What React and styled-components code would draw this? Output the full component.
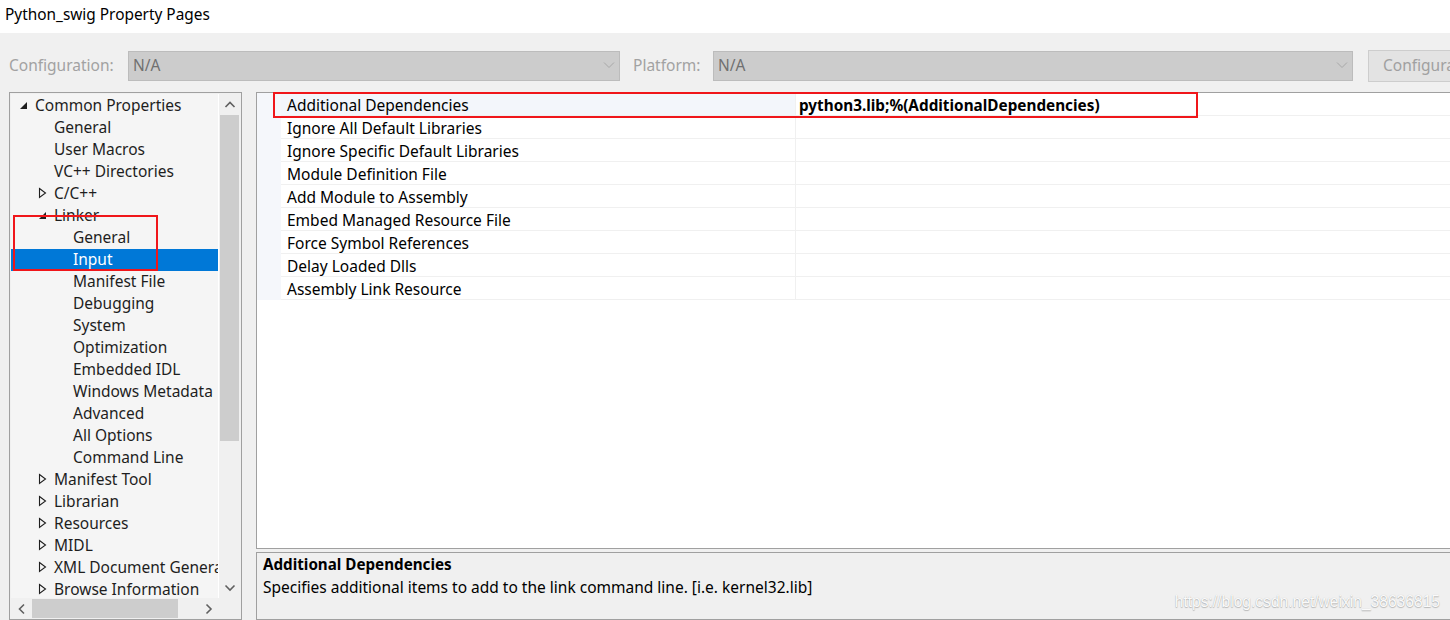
import React from "react";
import styled, { createGlobalStyle } from "styled-components";

const Global = createGlobalStyle`
  html, body { margin: 0; padding: 0; }
  body {
    width: 1450px; height: 620px; overflow: hidden;
    font-family: "Noto Sans", "Segoe UI", sans-serif;
    background: #f0f0f0;
  }
  * { box-sizing: border-box; }
`;

const Window = styled.div`
  position: relative;
  width: 1450px;
  height: 620px;
  overflow: hidden;
  background: #f0f0f0;
  display: flex;
  flex-direction: column;
`;

const TitleBar = styled.div`
  height: 33px;
  background: #ffffff;
  padding-left: 5px;
  display: flex;
  align-items: center;
  font-size: 15.4px;
  color: #000;
  padding-bottom: 5px;
`;

const Toolbar = styled.div`
  display: flex;
  align-items: center;
  height: 31px;
  margin-top: 17px;
  padding-left: 9px;
  white-space: nowrap;
`;

const Label = styled.span`
  font-size: 15.5px;
  color: #a2a2a2;
  width: ${(p) => p.$w}px;
  flex: none;
  padding-bottom: 1px;
`;

const Combo = styled.div`
  width: ${(p) => p.$w}px;
  height: 30px;
  flex: none;
  background: #cccccc;
  border: 1px solid #bcbcbc;
  display: flex;
  align-items: center;
  justify-content: space-between;
  padding: 0 4px 1px 4px;
  font-size: 15.5px;
  color: #707070;
  margin-right: ${(p) => p.$mr || 0}px;
`;

const Button = styled.div`
  height: 32px;
  width: 110px;
  flex: none;
  background: #e3e3e3;
  border: 1px solid #cdcdcd;
  font-size: 15.5px;
  color: #a0a0a0;
  display: flex;
  align-items: center;
  padding-left: 14px;
  padding-bottom: 1px;
  margin-left: 15px;
  white-space: nowrap;
  overflow: hidden;
`;

const Main = styled.div`
  display: flex;
  margin-top: 11px;
  padding-left: 9px;
  flex: 1;
  gap: 14px;
`;

const TreePanel = styled.div`
  position: relative;
  width: 233px;
  height: 528px;
  flex: none;
  border: 1px solid #a0a0a0;
  padding: 1px 0 0 1px;
  display: grid;
  grid-template-columns: 208px 21px;
  grid-template-rows: 504px 21px;
  background: #f0f0f0;
`;

const TreeBody = styled.div`
  background: #f5f5f5;
  overflow: hidden;
  border-right: 1px solid #ffffff;
  padding-top: 1px;
`;

const TreeRow = styled.div`
  height: 22px;
  display: flex;
  align-items: center;
  white-space: nowrap;
  font-size: 15.5px;
  color: ${(p) => (p.$sel ? "#ffffff" : "#1e1e1e")};
  background: ${(p) => (p.$sel ? "#0078d7" : "transparent")};
  padding-left: ${(p) => p.$level * 19 + 8}px;
  padding-bottom: 2px;
`;

const Expander = styled.span`
  width: 16px;
  height: 20px;
  flex: none;
  display: flex;
  align-items: center;
`;

const VScroll = styled.div`
  background: #f0f0f0;
  display: flex;
  flex-direction: column;
  align-items: center;
`;

const ScrollArrow = styled.div`
  width: 21px;
  height: 21px;
  flex: none;
  display: flex;
  align-items: center;
  justify-content: center;
`;

const VThumb = styled.div`
  width: 19px;
  height: ${(p) => p.$h}px;
  background: #cdcdcd;
  flex: none;
`;

const HScroll = styled.div`
  background: #f0f0f0;
  display: flex;
  align-items: center;
`;

const HThumb = styled.div`
  width: 146px;
  height: 19px;
  background: #cdcdcd;
  flex: none;
`;

const Spacer = styled.div`
  flex: 1;
`;

const Corner = styled.div`
  background: #f0f0f0;
`;

const RightCol = styled.div`
  position: relative;
  flex: 1;
  display: flex;
  flex-direction: column;
  margin-right: -4px;
`;

const GridPanel = styled.div`
  height: 457px;
  border: 1px solid #a0a0a0;
  background: #ffffff;
`;

const PropRow = styled.div`
  height: 23px;
  display: grid;
  grid-template-columns: 24px 515px 1fr;
  grid-template-rows: 23px;
  font-size: 15.5px;
  line-height: 20px;
  color: #000;
`;

const Margin = styled.div`
  background: #f5f7fb;
`;

const NameCell = styled.div`
  padding: 2px 0 0 6px;
  display: flex;
  align-items: center;
  background: ${(p) => (p.$sel ? "#f3f6fb" : "#ffffff")};
  border-bottom: 1px solid #f0f0f0;
  border-right: 1px solid #f0f0f0;
  white-space: nowrap;
`;

const ValueCell = styled.div`
  padding: 1px 0 0 3px;
  display: flex;
  align-items: center;
  border-bottom: 1px solid #f0f0f0;
  font-weight: ${(p) => (p.$bold ? 700 : 400)};
  font-size: ${(p) => (p.$bold ? "15.3px" : "15.5px")};
  white-space: nowrap;
`;

const DescPanel = styled.div`
  margin-top: 3px;
  height: 68px;
  border: 1px solid #a0a0a0;
  background: #f0f0f0;
  padding: 0 6px;
  font-size: 15.5px;
  color: #000;
  line-height: 23px;
`;

const DescTitle = styled.div`
  font-weight: 700;
  font-size: 15.2px;
`;

const Highlight = styled.div`
  position: absolute;
  left: ${(p) => p.$x}px;
  top: ${(p) => p.$y}px;
  width: ${(p) => p.$w}px;
  height: ${(p) => p.$h}px;
  border: 2px solid #f0161a;
  pointer-events: none;
`;

const Watermark = styled.div`
  position: absolute;
  right: 10px;
  bottom: 9px;
  font-family: "Liberation Sans", Arial, sans-serif;
  font-size: 15.6px;
  color: #fafafa;
  text-shadow: 0 1px 1px rgba(0, 0, 0, 0.22), 0 0 1px rgba(0, 0, 0, 0.2);
`;

const Chevron = () => (
  <svg width="12" height="8" viewBox="0 0 12 8">
    <path d="M1 1.5 L6 6.5 L11 1.5" fill="none" stroke="#a8a8a8" strokeWidth="1" />
  </svg>
);

const Expanded = () => (
  <svg width="10" height="10" viewBox="0 0 10 10">
    <path d="M8 2 L8 9 L1 9 Z" fill="#1e1e1e" />
  </svg>
);

const Collapsed = () => (
  <svg width="10" height="12" viewBox="0 0 10 12">
    <path d="M1.5 1.5 L7.5 6 L1.5 10.5 Z" fill="none" stroke="#1e1e1e" strokeWidth="1.1" />
  </svg>
);

const ArrowIcon = ({ dir }) => {
  const paths = {
    up: "M1.5 7 L6 2.5 L10.5 7",
    down: "M1.5 2.5 L6 7 L10.5 2.5",
    left: "M7 1.5 L2.5 6 L7 10.5",
    right: "M2.5 1.5 L7 6 L2.5 10.5",
  };
  const vert = dir === "up" || dir === "down";
  return (
    <svg width={vert ? 12 : 10} height={vert ? 10 : 12} viewBox={vert ? "0 0 12 10" : "0 0 10 12"}>
      <path d={paths[dir]} fill="none" stroke="#606060" strokeWidth="1.6" />
    </svg>
  );
};

const tree = [
  { t: "Common Properties", l: 0, e: "open" },
  { t: "General", l: 1 },
  { t: "User Macros", l: 1 },
  { t: "VC++ Directories", l: 1 },
  { t: "C/C++", l: 1, e: "closed" },
  { t: "Linker", l: 1, e: "open" },
  { t: "General", l: 2 },
  { t: "Input", l: 2, sel: true },
  { t: "Manifest File", l: 2 },
  { t: "Debugging", l: 2 },
  { t: "System", l: 2 },
  { t: "Optimization", l: 2 },
  { t: "Embedded IDL", l: 2 },
  { t: "Windows Metadata", l: 2 },
  { t: "Advanced", l: 2 },
  { t: "All Options", l: 2 },
  { t: "Command Line", l: 2 },
  { t: "Manifest Tool", l: 1, e: "closed" },
  { t: "Librarian", l: 1, e: "closed" },
  { t: "Resources", l: 1, e: "closed" },
  { t: "MIDL", l: 1, e: "closed" },
  { t: "XML Document Generator", l: 1, e: "closed" },
  { t: "Browse Information", l: 1, e: "closed" },
  { t: "Build Events", l: 1, e: "closed" },
];

const props = [
  { n: "Additional Dependencies", v: "python3.lib;%(AdditionalDependencies)", sel: true },
  { n: "Ignore All Default Libraries" },
  { n: "Ignore Specific Default Libraries" },
  { n: "Module Definition File" },
  { n: "Add Module to Assembly" },
  { n: "Embed Managed Resource File" },
  { n: "Force Symbol References" },
  { n: "Delay Loaded Dlls" },
  { n: "Assembly Link Resource" },
];

export default function App() {
  return (
    <Window>
      <Global />
      <TitleBar>Python_swig Property Pages</TitleBar>
      <Toolbar>
        <Label $w={119}>Configuration:</Label>
        <Combo $w={492} $mr={13}>
          <span>N/A</span>
          <Chevron />
        </Combo>
        <Label $w={80}>Platform:</Label>
        <Combo $w={640}>
          <span>N/A</span>
          <Chevron />
        </Combo>
        <Button>Configuration Manager...</Button>
      </Toolbar>
      <Main>
        <TreePanel>
          <TreeBody>
            {tree.map((r, i) => (
              <TreeRow key={i} $level={r.l} $sel={r.sel}>
                <Expander>
                  {r.e === "open" ? <Expanded /> : r.e === "closed" ? <Collapsed /> : null}
                </Expander>
                {r.t}
              </TreeRow>
            ))}
          </TreeBody>
          <VScroll>
            <ScrollArrow>
              <ArrowIcon dir="up" />
            </ScrollArrow>
            <VThumb $h={326} />
            <Spacer />
            <ScrollArrow>
              <ArrowIcon dir="down" />
            </ScrollArrow>
          </VScroll>
          <HScroll>
            <ScrollArrow>
              <ArrowIcon dir="left" />
            </ScrollArrow>
            <HThumb />
            <Spacer />
            <ScrollArrow>
              <ArrowIcon dir="right" />
            </ScrollArrow>
          </HScroll>
          <Corner />
          <Highlight $x={3} $y={122} $w={145} $h={56} />
        </TreePanel>
        <RightCol>
          <GridPanel>
            {props.map((p, i) => (
              <PropRow key={i}>
                <Margin />
                <NameCell $sel={p.sel}>{p.n}</NameCell>
                <ValueCell $bold={!!p.v}>{p.v || ""}</ValueCell>
              </PropRow>
            ))}
          </GridPanel>
          <DescPanel>
            <DescTitle>Additional Dependencies</DescTitle>
            <div>Specifies additional items to add to the link command line. [i.e. kernel32.lib]</div>
          </DescPanel>
          <Highlight $x={17} $y={0} $w={925} $h={26} />
        </RightCol>
      </Main>
      <Watermark>https://blog.csdn.net/weixin_38636815</Watermark>
    </Window>
  );
}
